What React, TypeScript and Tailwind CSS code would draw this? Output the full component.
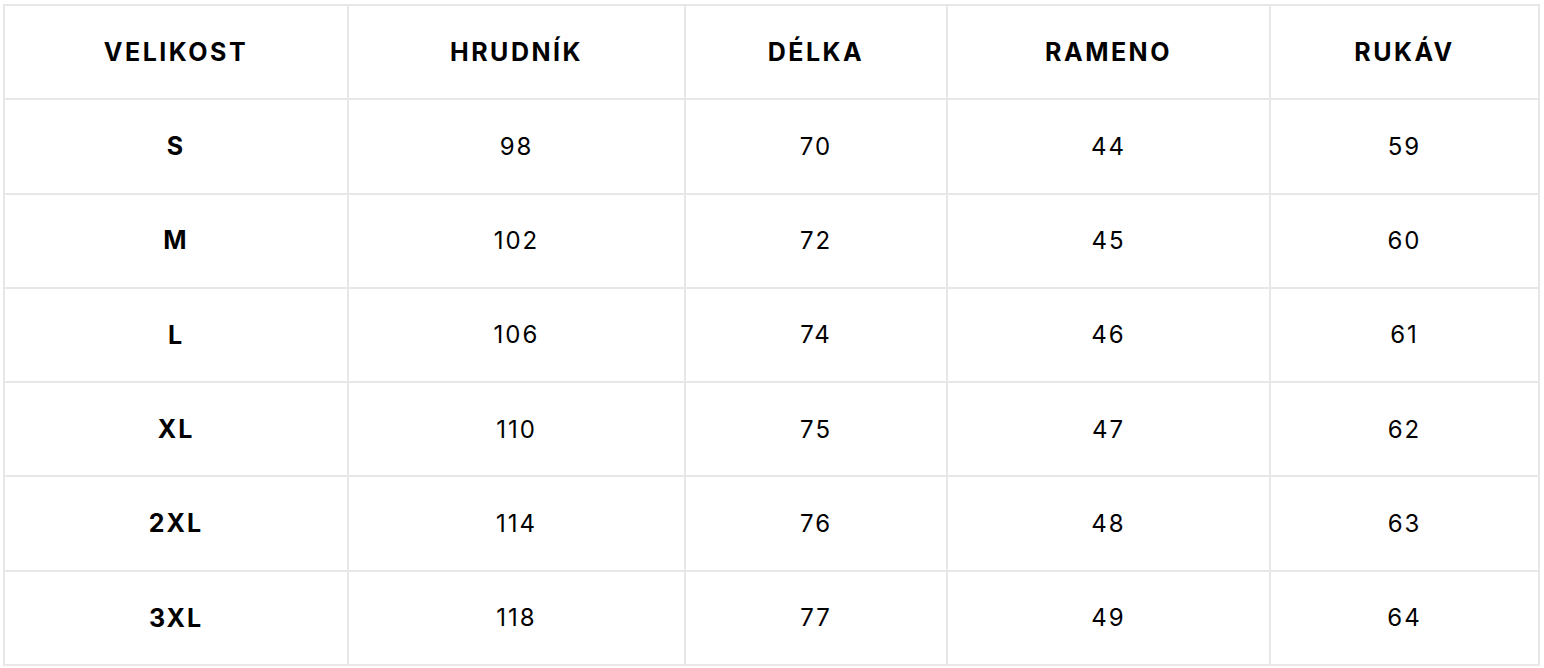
const headers = ["VELIKOST", "HRUDNÍK", "DÉLKA", "RAMENO", "RUKÁV"];

const rows: [string, number, number, number, number][] = [
  ["S", 98, 70, 44, 59],
  ["M", 102, 72, 45, 60],
  ["L", 106, 74, 46, 61],
  ["XL", 110, 75, 47, 62],
  ["2XL", 114, 76, 48, 63],
  ["3XL", 118, 77, 49, 64],
];

export default function App() {
  return (
    <div className="min-h-[668px] bg-white pl-[3px] pt-[4px] font-['Inter',sans-serif] text-black">
      <div className="grid h-[662px] w-[1537px] grid-cols-[342px_335px_260px_321px_267px] grid-rows-7 gap-[2px] bg-[#e7e7e7] p-[2px]">
        {headers.map((h) => (
          <div
            key={h}
            className="flex items-center justify-center bg-white pt-[1px] text-[25px] font-bold tracking-[2.5px]"
          >
            {h}
          </div>
        ))}
        {rows.map((r) =>
          r.map((cell, i) => (
            <div
              key={`${r[0]}-${i}`}
              className={
                i === 0
                  ? "flex items-center justify-center bg-white pt-[1px] text-[25px] font-bold tracking-[2px]"
                  : "flex items-center justify-center bg-white pt-[1px] text-[24px] font-normal tracking-[2px]"
              }
            >
              {cell}
            </div>
          ))
        )}
      </div>
    </div>
  );
}
